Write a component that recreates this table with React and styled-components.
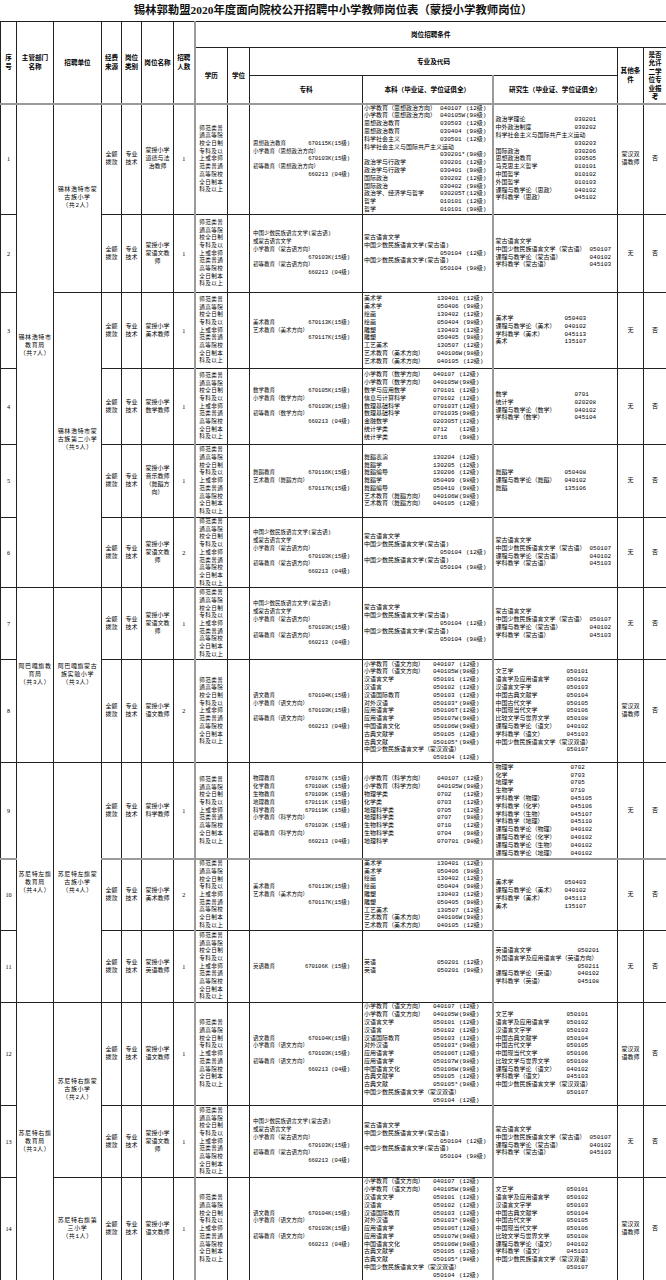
import React from 'react';
import styled, { createGlobalStyle, css } from 'styled-components';

const Global = createGlobalStyle`
  html, body { margin: 0; padding: 0; background: #fff; }
  body {
    width: 666px;
    font-family: "Liberation Mono", "Noto Sans CJK SC", monospace;
    color: #000;
  }
`;

const Page = styled.div`
  width: 666px;
`;

const Title = styled.h1`
  margin: 0;
  height: 21px;
  line-height: 21px;
  text-align: center;
  font-family: "Liberation Serif", "Noto Sans CJK SC", serif;
  font-weight: 700;
  font-size: 11.4px;
  color: #111;
`;

const Table = styled.table`
  width: 666px;
  border-collapse: collapse;
  table-layout: fixed;
  border: 1px solid #222;
`;

const HeadRow = styled.tr`
  height: ${p => p.$h}px;
`;

const sepLeft = css`
  border-left: 2px solid #9a9a9a;
`;

const Th = styled.th`
  border: 1px solid #222;
  padding: 0;
  font-family: "Noto Sans CJK SC", sans-serif;
  font-weight: 700;
  font-size: 6.6px;
  line-height: ${p => (p.$tight ? 8.4 : 9)}px;
  text-align: center;
  vertical-align: middle;
  white-space: pre-line;
  ${p => p.$sep && sepLeft}
`;

const BodyRow = styled.tr`
  height: ${p => p.$h}px;
  ${p =>
    p.$thickTop &&
    css`
      & > td {
        border-top: 2px solid #9a9a9a;
      }
    `}
`;

const Td = styled.td`
  border: 1px solid #222;
  padding: 0;
  font-size: 6px;
  line-height: 8px;
  text-align: center;
  vertical-align: middle;
  white-space: pre-line;
  overflow: hidden;
  ${p => p.$sep && sepLeft}
`;

const NoCell = styled(Td)`
  font-family: "Liberation Serif", serif;
  font-size: 6.2px;
`;

const TextCell = styled(Td)`
  letter-spacing: ${p => (p.$wide ? 0.6 : 0)}px;
`;

const EduCell = styled(Td)`
  font-size: 5.6px;
  line-height: 7.7px;
  letter-spacing: 0.4px;
`;

const ListCell = styled(Td)`
  text-align: left;
  white-space: nowrap;
  padding: 0 ${p => p.$pr}px 0 ${p => p.$pl}px;
  font-size: ${p => p.$fs}px;
  line-height: 7.8px;
  ${p => p.$sep && sepLeft}
`;

const Line = styled.div`
  display: flex;
  height: 7.8px;
  white-space: nowrap;
  justify-content: ${p => (p.$spread ? 'space-between' : 'flex-start')};
`;

const Name = styled.span`
  flex: none;
  width: ${p => (p.$w ? `${p.$w}px` : 'auto')};
`;

const Code = styled.span`
  flex: none;
  width: ${p => (p.$w ? `${p.$w}px` : 'auto')};
  margin-left: ${p => (p.$push ? 'auto' : '0')};
`;

const Level = styled.span`
  flex: none;
`;

/* ---------- data ---------- */

const EDU =
  '师范类普\n通高等院\n校全日制\n专科及以\n上或非师\n范类普通\n高等院校\n全日制本\n科及以上';

const ZK = {
  ethics: [
    ['思想政治教育', '670115K(15级)'],
    ['小学教育（思想政治方向）'],
    ['', '670103K(15级)'],
    ['初等教育（思想政治方向）'],
    ['', '660213 (04级)'],
  ],
  mongol: [
    ['中国少数民族语言文学(蒙古语)'],
    ['或蒙古语言文学'],
    ['小学教育（蒙古语方向）'],
    ['', '670103K(15级)'],
    ['初等教育（蒙古语方向）'],
    ['', '660213 (04级)'],
  ],
  art: [
    ['美术教育', '670113K(15级)'],
    ['艺术教育（美术方向）'],
    ['', '670117K(15级)'],
  ],
  math: [
    ['数学教育', '670105K(15级)'],
    ['小学教育（数学方向）'],
    ['', '670103K(15级)'],
    ['初等教育（数学方向）'],
    ['', '660213 (04级)'],
  ],
  dance: [
    ['舞蹈教育', '670116K(15级)'],
    ['艺术教育（舞蹈方向）'],
    ['', '670117K(15级)'],
  ],
  chinese: [
    ['语文教育', '670104K(15级)'],
    ['小学教育（语文方向）'],
    ['', '670103K(15级)'],
    ['初等教育（语文方向）'],
    ['', '660213 (04级)'],
  ],
  science: [
    ['物理教育', '670107K (15级)'],
    ['化学教育', '670108K (15级)'],
    ['生物教育', '670109K (15级)'],
    ['地理教育', '670111K (15级)'],
    ['科学教育', '670119K (15级)'],
    ['小学教育（科学方向）'],
    ['', '670103K (15级)'],
    ['初等教育（科学方向）'],
    ['', '660213  (04级)'],
  ],
  english: [['英语教育', '670106K (15级)']],
};

const BK = {
  ethics: [
    ['小学教育（思想政治方向）', '040107', '(12级)'],
    ['小学教育（思想政治方向）', '040105W', '(98级)'],
    ['思想政治教育', '030503', '(12级)'],
    ['思想政治教育', '030404', '(98级)'],
    ['科学社会主义', '030501', '(12级)'],
    ['科学社会主义与国际共产主义运动'],
    ['', '030201*', '(98级)'],
    ['政治学与行政学', '030201', '(12级)'],
    ['政治学与行政学', '030401', '(98级)'],
    ['国际政治', '030202', '(12级)'],
    ['国际政治', '030402', '(98级)'],
    ['政治学、经济学与哲学', '030205T', '(12级)'],
    ['哲学', '010101', '(12级)'],
    ['哲学', '010101', '(98级)'],
  ],
  mongol: [
    ['蒙古语言文学'],
    ['中国少数民族语言文学(蒙古语)'],
    ['', '050104', '(12级)'],
    ['中国少数民族语言文学(蒙古语)'],
    ['', '050104', '(98级)'],
  ],
  art: [
    ['美术学', '130401', '(12级)'],
    ['美术学', '050406', '(98级)'],
    ['绘画', '130402', '(12级)'],
    ['绘画', '050404', '(98级)'],
    ['雕塑', '130403', '(12级)'],
    ['雕塑', '050405', '(98级)'],
    ['工艺美术', '130507', '(12级)'],
    ['艺术教育（美术方向）', '040106W', '(98级)'],
    ['艺术教育（美术方向）', '040105', '(12级)'],
  ],
  math: [
    ['小学教育（数学方向）', '040107', '(12级)'],
    ['小学教育（数学方向）', '040105W', '(98级)'],
    ['数学与应用数学', '070101', '(12级)'],
    ['信息与计算科学', '070102', '(12级)'],
    ['数理基础科学', '070103T', '(12级)'],
    ['数理基础科学', '070103S', '(98级)'],
    ['金融数学', '020305T', '(12级)'],
    ['统计学类', '0712', '(12级)'],
    ['统计学类', '0716', '(98级)'],
  ],
  dance: [
    ['舞蹈表演', '130204', '(12级)'],
    ['舞蹈学', '130205', '(12级)'],
    ['舞蹈编导', '130206', '(12级)'],
    ['舞蹈学', '050409', '(98级)'],
    ['舞蹈编导', '050410', '(98级)'],
    ['艺术教育（舞蹈方向）', '040106W', '(98级)'],
    ['艺术教育（舞蹈方向）', '040105', '(12级)'],
  ],
  chinese: [
    ['小学教育（语文方向）', '040107', '(12级)'],
    ['小学教育（语文方向）', '040105W', '(98级)'],
    ['汉语言文学', '050101', '(12级)'],
    ['汉语言', '050102', '(12级)'],
    ['汉语国际教育', '050103', '(12级)'],
    ['对外汉语', '050103*', '(98级)'],
    ['应用语言学', '050106T', '(12级)'],
    ['应用语言学', '050107W', '(98级)'],
    ['中国语言文化', '050106W', '(98级)'],
    ['古典文献学', '050105', '(12级)'],
    ['古典文献', '050105*', '(98级)'],
    ['中国少数民族语言文学（蒙汉双语）'],
    ['', '050104', '(12级)'],
  ],
  science: [
    ['小学教育（科学方向）', '040107', '(12级)'],
    ['小学教育（科学方向）', '040105W', '(98级)'],
    ['物理学类', '0702', '(12级)'],
    ['化学类', '0703', '(12级)'],
    ['地理科学类', '0705', '(12级)'],
    ['地理科学类', '0707', '(98级)'],
    ['生物科学类', '0710', '(12级)'],
    ['生物科学类', '0704', '(98级)'],
    ['地理科学', '070701', '(98级)'],
  ],
  english: [
    ['英语', '050201', '(12级)'],
    ['英语', '050201', '(98级)'],
  ],
};

const BK_W = {
  ethics: [76, 26],
  mongol: [76, 26],
  art: [73, 26],
  math: [69, 26],
  dance: [69, 26],
  chinese: [69, 26],
  science: [73, 26],
  english: [73, 26],
};

const YJS = {
  ethics: [
    ['政治学理论', '030201'],
    ['中外政治制度', '030202'],
    ['科学社会主义与国际共产主义运动'],
    ['', '030203'],
    ['国际政治', '030206'],
    ['思想政治教育', '030505'],
    ['马克思主义哲学', '010101'],
    ['中国哲学', '010102'],
    ['外国哲学', '010103'],
    ['课程与教学论（思政）', '040102'],
    ['学科教学（思政）', '045102'],
  ],
  mongol: [
    ['蒙古语言文学'],
    ['中国少数民族语言文学（蒙古语）', '050107'],
    ['课程与教学论（蒙古语）', '040102'],
    ['学科教学（蒙古语）', '045103'],
  ],
  art: [
    ['美术学', '050403'],
    ['课程与教学论（美术）', '040102'],
    ['学科教学（美术）', '045113'],
    ['美术', '135107'],
  ],
  math: [
    ['数学', '0701'],
    ['统计学', '020208'],
    ['课程与教学论（数学）', '040102'],
    ['学科教学（数学）', '045104'],
  ],
  dance: [
    ['舞蹈学', '050408'],
    ['课程与教学论（舞蹈）', '040102'],
    ['舞蹈', '135106'],
  ],
  chinese: [
    ['文艺学', '050101'],
    ['语言学及应用语言学', '050102'],
    ['汉语言文字学', '050103'],
    ['中国古典文献学', '050104'],
    ['中国古代文学', '050105'],
    ['中国现当代文学', '050106'],
    ['比较文学与世界文学', '050108'],
    ['课程与教学论（语文）', '040102'],
    ['学科教学（语文）', '045103'],
    ['中国少数民族语言文学（蒙汉双语）'],
    ['', '050107'],
  ],
  science: [
    ['物理学', '0702'],
    ['化学', '0703'],
    ['地理学', '0705'],
    ['生物学', '0710'],
    ['学科教学（物理）', '045105'],
    ['学科教学（化学）', '045106'],
    ['学科教学（生物）', '045107'],
    ['学科教学（地理）', '045110'],
    ['课程与教学论（物理）', '040102'],
    ['课程与教学论（化学）', '040102'],
    ['课程与教学论（生物）', '040102'],
    ['课程与教学论（地理）', '040102'],
  ],
  english: [
    ['英语语言文学', '050201'],
    ['外国语言学及应用语言学（英语方向）'],
    ['', '050211'],
    ['课程与教学论（英语）', '040102'],
    ['学科教学（英语）', '045108'],
  ],
};

const YJS_W = {
  ethics: 79,
  mongol: 94,
  art: 69,
  math: 79,
  dance: 69,
  chinese: 71,
  science: 75,
  english: 82,
};

const BILINGUAL = '蒙汉双\n语教师';
const POST_MONGOL = '蒙授小学\n蒙语文教\n师';

const ROWS = [
  {
    no: 1, h: 111, n: 1, major: 'ethics', other: BILINGUAL,
    dept: { text: '锡林浩特市\n教育局\n（共7人）', span: 6 },
    unit: { text: '锡林浩特市蒙\n古族小学\n（共2人）', span: 2 },
    post: '蒙授小学\n道德与法\n治教师',
  },
  { no: 2, h: 78, n: 1, major: 'mongol', other: '无', post: POST_MONGOL },
  {
    no: 3, h: 76, n: 1, major: 'art', other: '无', post: '蒙授小学\n美术教师',
    unit: { text: '锡林浩特市蒙\n古族第二小学\n（共5人）', span: 4 },
  },
  { no: 4, h: 76, n: 1, major: 'math', other: '无', post: '蒙授小学\n数学教师' },
  { no: 5, h: 73, n: 1, major: 'dance', other: '无', post: '蒙授小学\n音乐教师\n（舞蹈方\n向）' },
  { no: 6, h: 70, n: 2, major: 'mongol', other: '无', post: POST_MONGOL },
  {
    no: 7, h: 72, n: 1, major: 'mongol', other: '无', post: POST_MONGOL,
    dept: { text: '阿巴嘎旗教\n育局\n（共3人）', span: 2 },
    unit: { text: '阿巴嘎旗蒙古\n族实验小学\n（共3人）', span: 2 },
  },
  { no: 8, h: 103, n: 2, major: 'chinese', other: BILINGUAL, post: '蒙授小学\n语文教师' },
  {
    no: 9, h: 96, n: 1, major: 'science', other: '无', post: '蒙授小学\n科学教师',
    dept: { text: '苏尼特左旗\n教育局\n（共4人）', span: 3 },
    unit: { text: '苏尼特左旗蒙\n古族小学\n（共4人）', span: 3 },
  },
  { no: 10, h: 71, n: 2, major: 'art', other: '无', post: '蒙授小学\n美术教师', thickTop: true },
  { no: 11, h: 72, n: 1, major: 'english', other: '无', post: '蒙授小学\n英语教师' },
  {
    no: 12, h: 103, n: 1, major: 'chinese', other: BILINGUAL, post: '蒙授小学\n语文教师',
    dept: { text: '苏尼特右旗\n教育局\n（共3人）', span: 3 },
    unit: { text: '苏尼特右旗蒙\n古族小学\n（共2人）', span: 2 },
  },
  { no: 13, h: 72, n: 1, major: 'mongol', other: '无', post: POST_MONGOL },
  {
    no: 14, h: 103, n: 1, major: 'chinese', other: BILINGUAL, post: '蒙授小学\n语文教师',
    unit: { text: '苏尼特右旗第\n三小学\n（共1人）', span: 1 },
  },
];

const COLS = [16, 37, 48, 20, 20, 32, 21, 33, 22, 113, 130, 125, 26, 23];

/* ---------- pieces ---------- */

function ZkList({ lines }) {
  return lines.map(([name, code], i) => (
    <Line key={i} $spread={!!name && !!code}>
      {name ? <Name>{name}</Name> : null}
      {code ? <Code $push={!name}>{code}</Code> : null}
    </Line>
  ));
}

function BkList({ lines, nameW, codeW }) {
  return lines.map(([name, code, level], i) => (
    <Line key={i}>
      <Name $w={code ? nameW : 0}>{name}</Name>
      {code ? <Code $w={codeW}>{code}</Code> : null}
      {level ? <Level>{level}</Level> : null}
    </Line>
  ));
}

function YjsList({ lines, nameW }) {
  return lines.map(([name, code], i) => (
    <Line key={i}>
      <Name $w={code ? nameW : 0}>{name}</Name>
      {code ? <Code>{code}</Code> : null}
    </Line>
  ));
}

export default function App() {
  return (
    <Page>
      <Global />
      <Title>锡林郭勒盟2020年度面向院校公开招聘中小学教师岗位表（蒙授小学教师岗位）</Title>
      <Table>
        <colgroup>
          {COLS.map((w, i) => (
            <col key={i} style={{ width: w }} />
          ))}
        </colgroup>
        <thead>
          <HeadRow $h={26}>
            <Th rowSpan={3}>{'序\n号'}</Th>
            <Th rowSpan={3}>{'主管部门\n名称'}</Th>
            <Th rowSpan={3}>招聘单位</Th>
            <Th rowSpan={3}>{'经费\n来源'}</Th>
            <Th rowSpan={3}>{'岗位\n类别'}</Th>
            <Th rowSpan={3}>岗位名称</Th>
            <Th rowSpan={3}>{'招聘\n人数'}</Th>
            <Th colSpan={7} $sep>岗位招聘条件</Th>
          </HeadRow>
          <HeadRow $h={28}>
            <Th rowSpan={2} $sep>学历</Th>
            <Th rowSpan={2}>学位</Th>
            <Th colSpan={3}>专业及代码</Th>
            <Th rowSpan={2}>{'其他条\n件'}</Th>
            <Th rowSpan={2} $tight>{'是否\n允许\n二学\n位专\n业报\n考'}</Th>
          </HeadRow>
          <HeadRow $h={28}>
            <Th>专科</Th>
            <Th>本科（毕业证、学位证俱全）</Th>
            <Th $sep>研究生（毕业证、学位证俱全）</Th>
          </HeadRow>
        </thead>
        <tbody>
          {ROWS.map((r, i) => (
            <BodyRow key={r.no} $h={r.h} $thickTop={i === 0 || r.thickTop}>
              <NoCell>{r.no}</NoCell>
              {r.dept ? (
                <TextCell rowSpan={r.dept.span} $wide>
                  {r.dept.text}
                </TextCell>
              ) : null}
              {r.unit ? (
                <TextCell rowSpan={r.unit.span} $wide>
                  {r.unit.text}
                </TextCell>
              ) : null}
              <TextCell>{'全额\n拨款'}</TextCell>
              <TextCell>{'专业\n技术'}</TextCell>
              <TextCell>{r.post}</TextCell>
              <NoCell>{r.n}</NoCell>
              <EduCell $sep>{EDU}</EduCell>
              <Td />
              <ListCell $pl={3} $pr={12} $fs={5.5}>
                <ZkList lines={ZK[r.major]} />
              </ListCell>
              <ListCell $pl={1} $pr={2} $fs={6}>
                <BkList lines={BK[r.major]} nameW={BK_W[r.major][0]} codeW={BK_W[r.major][1]} />
              </ListCell>
              <ListCell $pl={2} $pr={1} $fs={6} $sep>
                <YjsList lines={YJS[r.major]} nameW={YJS_W[r.major]} />
              </ListCell>
              <TextCell>{r.other}</TextCell>
              <TextCell>否</TextCell>
            </BodyRow>
          ))}
        </tbody>
      </Table>
    </Page>
  );
}
